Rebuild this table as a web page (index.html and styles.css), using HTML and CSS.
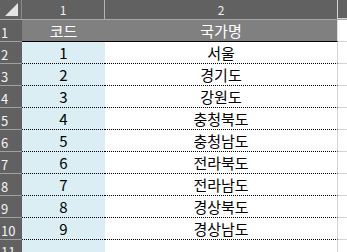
FILE: index.html
```html
<!DOCTYPE html>
<html lang="ko">
<head>
<meta charset="utf-8">
<link rel="stylesheet" href="styles.css">
</head>
<body>
<div class="sheet">
  <div class="row colhead">
    <div class="corner">
      <svg width="21" height="19" viewBox="0 0 21 19"><polygon points="18,3 18,16 5,16" fill="#e4e4e4"/></svg>
    </div>
    <div class="ch cA">1</div>
    <div class="ch cB">2</div>
    <div class="ch rest"></div>
  </div>
  <div class="row titles">
    <div class="rh">1</div>
    <div class="cell cA head">코드</div>
    <div class="cell cB head">국가명</div>
    <div class="cell rest"></div>
  </div>
  <div class="row data"><div class="rh">2</div><div class="cell cA code">1</div><div class="cell cB">서울</div><div class="cell rest"></div></div>
  <div class="row data"><div class="rh">3</div><div class="cell cA code">2</div><div class="cell cB">경기도</div><div class="cell rest"></div></div>
  <div class="row data"><div class="rh">4</div><div class="cell cA code">3</div><div class="cell cB">강원도</div><div class="cell rest"></div></div>
  <div class="row data"><div class="rh">5</div><div class="cell cA code">4</div><div class="cell cB">충청북도</div><div class="cell rest"></div></div>
  <div class="row data"><div class="rh">6</div><div class="cell cA code">5</div><div class="cell cB">충청남도</div><div class="cell rest"></div></div>
  <div class="row data"><div class="rh">7</div><div class="cell cA code">6</div><div class="cell cB">전라북도</div><div class="cell rest"></div></div>
  <div class="row data"><div class="rh">8</div><div class="cell cA code">7</div><div class="cell cB">전라남도</div><div class="cell rest"></div></div>
  <div class="row data"><div class="rh">9</div><div class="cell cA code">8</div><div class="cell cB">경상북도</div><div class="cell rest"></div></div>
  <div class="row data"><div class="rh">10</div><div class="cell cA code">9</div><div class="cell cB">경상남도</div><div class="cell rest"></div></div>
  <div class="row empty"><div class="rh">11</div><div class="cell cA code"></div><div class="cell cB"></div><div class="cell rest"></div></div>
</div>
</body>
</html>
```

FILE: styles.css
```css
* { box-sizing: border-box; }
html, body { margin: 0; padding: 0; background: #ffffff; }
body {
  width: 347px;
  height: 252px;
  overflow: hidden;
  font-family: "Noto Sans CJK KR", "Noto Sans", sans-serif;
}
.sheet { display: flex; flex-direction: column; }
.row { display: flex; }

.colhead { height: 20px; background: #616161; border-bottom: 1px solid #a8a8a8; }
.corner { width: 22px; border-right: 1px solid #8a8a8a; display: flex; }
.corner svg { display: block; }
.ch {
  color: #f0f0f0;
  font-size: 12px;
  line-height: 19px;
  text-align: center;
  border-right: 1px solid #b4b4b4;
}
.colhead .cA { width: 83px; }
.colhead .cB { width: 233px; }
.colhead .rest { flex: 1; border-right: none; }

.rh {
  width: 22px;
  flex: none;
  background: #616161;
  color: #f4f4f4;
  font-size: 13px;
  padding-left: 1px;
  border-bottom: 1px solid #a0a0a0;
  display: flex;
  align-items: center;
  padding-top: 3px;
  overflow: hidden;
}
.cell {
  display: flex;
  align-items: center;
  justify-content: center;
  font-size: 15px;
  color: #000;
}
.cA { width: 83px; flex: none; }
.cB { width: 233px; flex: none; border-right: 1px solid #d4d4d4; }
.rest { flex: 1; border-bottom: 1px solid #d4d4d4; }

.titles { height: 22px; }
.titles .head {
  background: #808080;
  color: #ffffff;
  border-bottom: 1px solid #000;
}
.titles .cB { border-right-color: #e0e0e0; }

.data { height: 22px; }
.data .cA, .data .cB { border-bottom: 1px dotted #000; }
.code { background: #daeef3; }

.empty { height: 13px; }
.empty .rh { align-items: flex-start; padding-top: 2px; }
```
